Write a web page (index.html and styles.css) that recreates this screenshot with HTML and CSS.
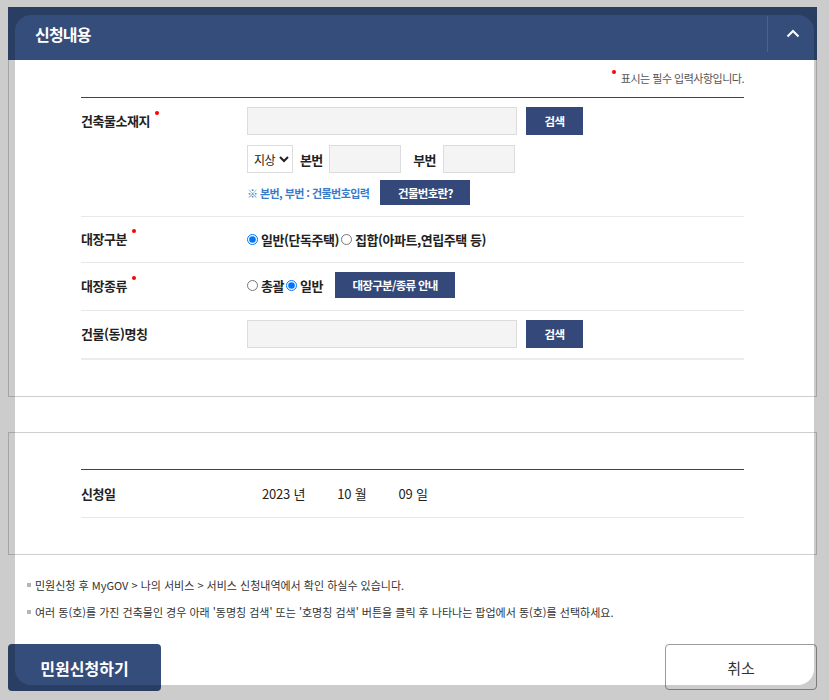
FILE: index.html
```html
<!DOCTYPE html>
<html lang="ko">
<head>
<meta charset="utf-8">
<title>신청내용</title>
<link rel="stylesheet" href="styles.css">
</head>
<body>
<div class="page">
  <section class="panel">
    <div class="panel-head">
      <h2>신청내용</h2>
      <button class="toggle" type="button" aria-label="접기">
        <svg width="14" height="9" viewBox="0 0 14 9"><polyline points="1.5,7.5 7,2 12.5,7.5" fill="none" stroke="#fff" stroke-width="2"/></svg>
      </button>
    </div>
    <div class="panel-body">
      <p class="req-note"><span class="dot"></span>표시는 필수 입력사항입니다.</p>
      <div class="form">
        <div class="row first">
          <div class="label"><span class="req">건축물소재지</span></div>
          <div class="field">
            <div class="line">
              <input class="inp wide" type="text">
              <button class="btn search" type="button">검색</button>
            </div>
            <div class="line sub">
              <select class="sel"><option>지상</option></select>
              <span class="sublabel">본번</span>
              <input class="inp num" type="text">
              <span class="sublabel second">부번</span>
              <input class="inp num" type="text">
            </div>
            <div class="line hint-line">
              <span class="hint">※ 본번, 부번 : 건물번호입력</span>
              <button class="btn small" type="button">건물번호란?</button>
            </div>
          </div>
        </div>
        <div class="row short">
          <div class="label"><span class="req">대장구분</span></div>
          <div class="field">
            <div class="line radios">
              <label class="radio"><input type="radio" name="g1" checked>일반(단독주택)</label>
              <label class="radio"><input type="radio" name="g1">집합(아파트,연립주택 등)</label>
            </div>
          </div>
        </div>
        <div class="row">
          <div class="label"><span class="req">대장종류</span></div>
          <div class="field">
            <div class="line radios">
              <label class="radio"><input type="radio" name="g2">총괄</label>
              <label class="radio"><input type="radio" name="g2" checked>일반</label>
              <button class="btn guide" type="button">대장구분/종류 안내</button>
            </div>
          </div>
        </div>
        <div class="row last">
          <div class="label">건물(동)명칭</div>
          <div class="field">
            <div class="line">
              <input class="inp wide" type="text">
              <button class="btn search" type="button">검색</button>
            </div>
          </div>
        </div>
      </div>
    </div>
  </section>

  <section class="box">
    <div class="form">
      <div class="row date-row">
        <div class="label">신청일</div>
        <div class="date">
          <span>2023 년</span>
          <span>10 월</span>
          <span>09 일</span>
        </div>
      </div>
    </div>
  </section>

  <ul class="notes">
    <li>민원신청 후 MyGOV &gt; 나의 서비스 &gt; 서비스 신청내역에서 확인 하실수 있습니다.</li>
    <li>여러 동(호)를 가진 건축물인 경우 아래 '동명칭 검색' 또는 '호명칭 검색' 버튼을 클릭 후 나타나는 팝업에서 동(호)를 선택하세요.</li>
  </ul>

  <div class="actions">
    <button class="act primary" type="button">민원신청하기</button>
    <button class="act cancel" type="button">취소</button>
  </div>
</div>
<div class="dim"></div>
</body>
</html>
```

FILE: styles.css
```css
* { box-sizing: border-box; }
body {
  margin: 0;
  background: #fff;
  font-family: "Noto Sans CJK KR", "Noto Sans", sans-serif;
  color: #222;
}
.page {
  width: 809px;
  margin: 7px 0 0 8px;
}
.panel-head {
  height: 53px;
  background: #354d7b;
  display: flex;
  align-items: center;
}
.panel-head h2 {
  flex: 1;
  margin: 0 0 0 27px;
  color: #fff;
  font-size: 16px;
  font-weight: 700;
  letter-spacing: -0.8px;
}
.toggle {
  width: 50px;
  height: 36px;
  padding: 0;
  border: 0;
  border-left: 1px solid #4b6190;
  background: transparent;
  display: flex;
  align-items: center;
  justify-content: center;
}
.panel-body {
  border: 1px solid #cfcfcf;
  border-top: 0;
  padding: 10px 72px 36px;
}
.req-note {
  margin: 0 0 11px;
  text-align: right;
  font-size: 11px;
  line-height: 16px;
  color: #555;
  letter-spacing: -0.5px;
}
.req-note .dot {
  display: inline-block;
  width: 4px;
  height: 4px;
  border-radius: 50%;
  background: #f00;
  vertical-align: top;
  margin: 0 5px 0 0;
}
.form {
  border-top: 1px solid #2f4472;
}
.row {
  display: grid;
  grid-template-columns: 166px 1fr;
  align-items: start;
  padding: 9px 0 10px;
  border-bottom: 1px solid #e8e8e8;
}
.row.first { padding-bottom: 11px; }
.row.short { padding: 9px 0 10px; }
.row.short .label { line-height: 26px; }
.row.last { border-bottom: 2px solid #ececec; }
.label {
  font-size: 13px;
  font-weight: 700;
  line-height: 28px;
  letter-spacing: -0.45px;
  color: #222;
}
.req { position: relative; }
.req::after {
  content: "";
  position: absolute;
  right: -9px;
  top: 0px;
  width: 4px;
  height: 4px;
  border-radius: 50%;
  background: #f00;
}
.field { display: flex; flex-direction: column; }
.line {
  display: flex;
  align-items: center;
  min-height: 28px;
}
.line.sub { margin-top: 10px; }
.line.hint-line { margin-top: 7px; min-height: 25px; }
.line.radios { min-height: 26px; }
.inp {
  height: 28px;
  border: 1px solid #dcdcdc;
  background: #f4f4f4;
  margin: 0;
  padding: 0 6px;
}
.inp.wide { width: 270px; }
.inp.num { width: 72px; }
.sel {
  width: 46px;
  height: 28px;
  border: 1px solid #dcdcdc;
  background: #fff;
  font-family: inherit;
  font-size: 12px;
  color: #222;
  padding: 0 0 0 2px;
  margin: 0;
  letter-spacing: -0.6px;
}
.sublabel {
  font-size: 13px;
  font-weight: 700;
  letter-spacing: -0.8px;
  margin: 0 7px 0 7px;
}
.sublabel.second { margin-left: 12px; }
.btn {
  border: 0;
  padding: 0;
  background: #34497a;
  color: #fff;
  font-family: inherit;
  font-weight: 700;
  font-size: 11.5px;
  letter-spacing: -0.7px;
}
.btn.search { width: 57px; height: 28px; margin-left: 9px; }
.btn.small { width: 90px; height: 25px; margin-left: 11px; }
.btn.guide { width: 120px; height: 26px; margin-left: 12px; }
.hint {
  color: #3a7bc8;
  font-size: 11px;
  font-weight: 700;
  letter-spacing: -0.55px;
}
.radio {
  display: inline-flex;
  align-items: center;
  font-size: 13px;
  font-weight: 700;
  letter-spacing: -0.45px;
  color: #222;
}
.radio input {
  width: 11px;
  height: 11px;
  margin: 0 3px 0 0;
}
.radio + .radio { margin-left: 2px; }

.box {
  margin-top: 35px;
  border: 1px solid #cfcfcf;
  padding: 36px 72px 36px;
}
.date-row {
  grid-template-columns: 181px 1fr;
  align-items: center;
  padding: 0;
  height: 48px;
}
.date-row .label { line-height: 47px; }
.date {
  display: flex;
  font-size: 13px;
  letter-spacing: -0.2px;
  color: #222;
}
.date span + span { margin-left: 32px; }

.notes {
  list-style: none;
  margin: 18px 0 0;
  padding: 0 0 0 27px;
}
.notes li {
  position: relative;
  font-size: 11px;
  line-height: 24px;
  color: #333;
  letter-spacing: 0;
}
.notes li + li { margin-top: 3px; }
.notes li::before {
  content: "";
  position: absolute;
  left: -8px;
  top: 10px;
  width: 4px;
  height: 4px;
  background: #b5b5b5;
}
.actions {
  margin-top: 20px;
  display: flex;
  justify-content: space-between;
  align-items: flex-start;
}
.act {
  font-family: inherit;
  border-radius: 4px;
  padding: 0;
}
.act.primary {
  width: 153px;
  height: 47px;
  border: 0;
  background: #354d7b;
  color: #fff;
  font-weight: 700;
  font-size: 16px;
  letter-spacing: 0;
}
.act.cancel {
  width: 152px;
  height: 46px;
  border: 1px solid #9a9a9a;
  background: #fff;
  color: #333;
  font-size: 15px;
  letter-spacing: 0;
}
.dim {
  position: fixed;
  left: 15px;
  top: 15px;
  width: 799px;
  height: 670px;
  border-radius: 16px;
  box-shadow: 0 0 0 3000px rgba(0, 0, 0, 0.2);
  pointer-events: none;
}
```
